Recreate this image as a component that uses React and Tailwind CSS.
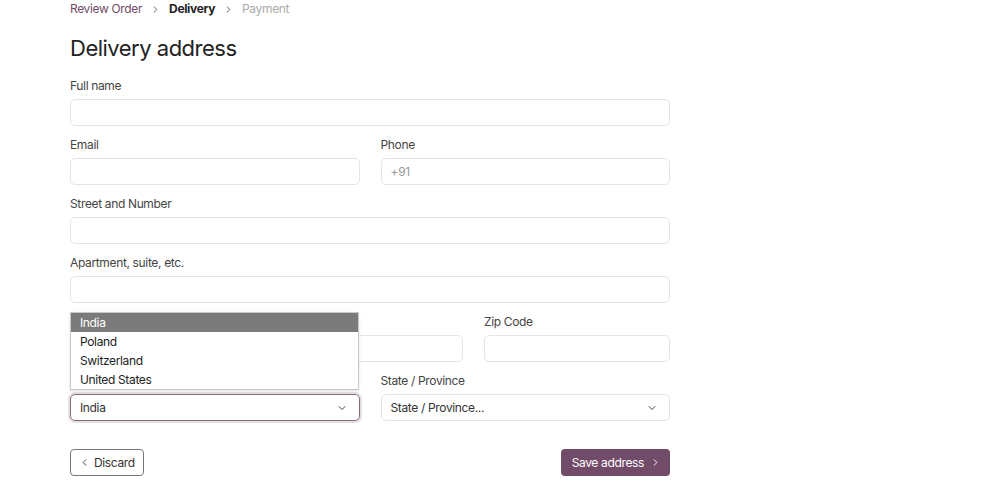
import { ChevronDown, ChevronLeft, ChevronRight } from 'lucide-react';

const Field = ({ label, placeholder, className = '' }) => (
    <div className={`flex flex-col ${className}`}>
        <label className="text-[12px] leading-5 text-[#444] mb-[3px]">{label}</label>
        <input
            type="text"
            placeholder={placeholder}
            className="h-[27px] w-full rounded-[5px] border border-[#e4e4e4] px-[9px] text-[12px] tracking-[-0.3px] text-[#333] placeholder:text-[#999] outline-none"
        />
    </div>
);

const Select = ({ label, value, focused, className = '', children }) => (
    <div className={`relative flex flex-col ${className}`}>
        <label className="text-[12px] leading-5 text-[#444] mb-[3px]">{label}</label>
        <div
            className={`flex h-[27px] items-center justify-between rounded-[5px] px-[9px] text-[12px] text-[#333] ${
                focused
                    ? 'border border-[#8a6b80] shadow-[0_0_0_2px_rgba(113,75,103,0.18)]'
                    : 'border border-[#e4e4e4]'
            }`}
        >
            <span>{value}</span>
            <ChevronDown size={12} strokeWidth={2} className="mr-[2px] text-[#444]" />
        </div>
        {children}
    </div>
);

const countries = ['India', 'Poland', 'Switzerland', 'United States'];

const App = () => {
    return (
        <div
            className="min-h-screen bg-white tracking-[-0.35px]"
            style={{ fontFamily: 'Inter, "Noto Sans", sans-serif' }}
        >
            <div className="w-[600px] ml-[70px] relative">
                <nav className="flex items-center h-[18px] text-[12px]">
                    <span className="text-[#714B67]">Review Order</span>
                    <ChevronRight size={11} strokeWidth={2} className="mx-[8px] text-[#555]" />
                    <span className="font-bold text-[#222]">Delivery</span>
                    <ChevronRight size={11} strokeWidth={2} className="mx-[8px] text-[#555]" />
                    <span className="text-[#aaa]">Payment</span>
                </nav>

                <h1 className="mt-[16px] text-[22px] leading-7 text-[#222] tracking-[-0.5px]">Delivery address</h1>

                <div className="mt-[14px] flex flex-col gap-[9px]">
                    <Field label="Full name" />
                    <div className="grid grid-cols-2 gap-x-[21px]">
                        <Field label="Email" />
                        <Field label="Phone" placeholder="+91" />
                    </div>
                    <Field label="Street and Number" />
                    <Field label="Apartment, suite, etc." />
                    <div className="flex gap-x-[21px]">
                        <Field label="City" className="w-[393px]" />
                        <Field label="Zip Code" className="flex-1" />
                    </div>
                    <div className="grid grid-cols-2 gap-x-[21px]">
                        <Select label="Country" value="India" focused>
                            <ul className="absolute left-0 bottom-[31px] w-[289px] border border-[#c8c8c8] bg-white text-[12px] text-[#222] shadow-sm">
                                {countries.map((c, i) => (
                                    <li
                                        key={c}
                                        className={`h-[19px] leading-[19px] px-[9px] ${
                                            i === 0 ? 'bg-[#7b7b7b] text-white' : ''
                                        }`}
                                    >
                                        {c}
                                    </li>
                                ))}
                            </ul>
                        </Select>
                        <Select label="State / Province" value="State / Province..." />
                    </div>
                </div>

                <div className="mt-[28px] flex items-center justify-between">
                    <button className="flex h-[27px] items-center gap-[4px] rounded-[4px] border border-[#777] pl-[8px] pr-[8px] text-[12px] text-[#333]">
                        <ChevronLeft size={11} strokeWidth={2} />
                        Discard
                    </button>
                    <button className="flex h-[27px] items-center gap-[6px] rounded-[4px] bg-[#714B67] pl-[11px] pr-[9px] text-[12px] text-white">
                        Save address
                        <ChevronRight size={11} strokeWidth={2} />
                    </button>
                </div>
            </div>
        </div>
    );
};

export default App;
